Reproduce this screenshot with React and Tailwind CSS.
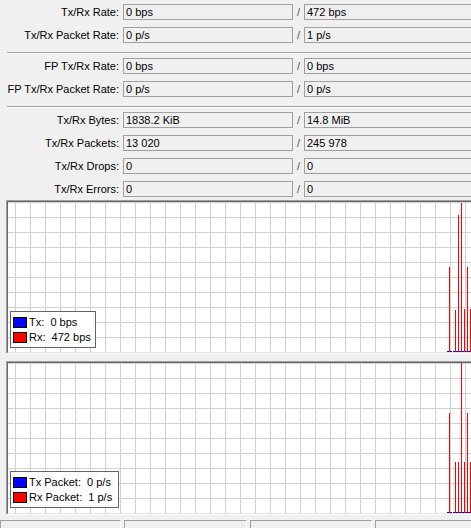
const rateRows = [
  ['Tx/Rx Rate:', '0 bps', '472 bps'],
  ['Tx/Rx Packet Rate:', '0 p/s', '1 p/s'],
];

const fpRows = [
  ['FP Tx/Rx Rate:', '0 bps', '0 bps'],
  ['FP Tx/Rx Packet Rate:', '0 p/s', '0 p/s'],
];

const totalRows = [
  ['Tx/Rx Bytes:', '1838.2 KiB', '14.8 MiB'],
  ['Tx/Rx Packets:', '13 020', '245 978'],
  ['Tx/Rx Drops:', '0', '0'],
  ['Tx/Rx Errors:', '0', '0'],
];

// x / y of each rx sample inside the 470x150 plot area
const trafficBars = [
  [441, 65], [447, 108], [450, 13], [453, 1], [456, 107], [459, 65], [462, 107],
];
const packetBars = [
  [441, 50], [447, 99], [450, 99], [453, 0], [456, 99], [459, 50], [462, 99],
];

function Field({ value }) {
  return (
    <div className="h-[16px] w-[170px] shrink-0 border border-[#a0a0a0] bg-[#f0f0f0] px-[2px] leading-[14px] whitespace-nowrap">
      {value}
    </div>
  );
}

function StatRow({ label, tx, rx }) {
  return (
    <div className="flex h-[16px] items-center">
      <div className="w-[119px] shrink-0 text-right whitespace-nowrap">{label}</div>
      <div className="w-[4px] shrink-0" />
      <Field value={tx} />
      <div className="w-[11px] shrink-0 text-center text-[#555]">/</div>
      <Field value={rx} />
    </div>
  );
}

function Group({ rows }) {
  return (
    <div className="flex flex-col gap-[7px]">
      {rows.map(([label, tx, rx]) => (
        <StatRow key={label} label={label} tx={tx} rx={rx} />
      ))}
    </div>
  );
}

function Separator() {
  return <div className="ml-[7px] mt-[9px] mb-[4px] h-[2px] border-t border-b border-t-[#a0a0a0] border-b-white" />;
}

function LegendRow({ color, text }) {
  return (
    <div className="flex h-[15px] items-center gap-[2px]">
      <span className={`h-[11px] w-[14px] border border-black ${color}`} />
      <span className="whitespace-pre">{text}</span>
    </div>
  );
}

function Graph({ bars, legend, legendWidth, legendTop }) {
  return (
    <div className="ml-[6px] w-[474px] border-t border-l border-r border-b border-t-[#a0a0a0] border-l-[#a0a0a0] border-r-white border-b-white">
      <div className="border-t border-l border-r border-b border-t-[#696969] border-l-[#696969] border-r-[#e3e3e3] border-b-[#e3e3e3]">
        <div className="relative h-[150px] overflow-hidden bg-white bg-[linear-gradient(to_right,#d0d0d0_1px,transparent_1px),linear-gradient(to_bottom,#d0d0d0_1px,transparent_1px)] bg-size-[15px_15px] bg-position-[7px_0px]">
          <svg className="absolute left-0 top-0" width="470" height="150">
            {Array.from({ length: 11 }, (_, i) => (
              <rect key={i} x={439 + i * 3} y="149" width="2" height="1" fill="#0000ff" />
            ))}
            {bars.map(([x, y]) => (
              <rect key={x} x={x} y={y} width="1" height={150 - y} fill="#ff0000" />
            ))}
          </svg>
          <div
            className="absolute left-[2px] h-[37px] border border-[#646464] bg-white pl-[2px] pt-[3px]"
            style={{ width: legendWidth, top: legendTop }}
          >
            <LegendRow color="bg-[#0000ff]" text={legend[0]} />
            <LegendRow color="bg-[#ff0000]" text={legend[1]} />
          </div>
        </div>
      </div>
    </div>
  );
}

export default function App() {
  return (
    <div className="h-[528px] w-[471px] overflow-hidden bg-[#f0f0f0] font-['Liberation_Sans',Arial,sans-serif] text-[11px] text-black">
      <div className="flex w-[480px] flex-col pt-[4px]">
        <Group rows={rateRows} />
        <Separator />
        <Group rows={fpRows} />
        <Separator />
        <Group rows={totalRows} />

        <div className="mt-[3px]">
          <Graph bars={trafficBars} legend={['Tx:  0 bps', 'Rx:  472 bps']} legendWidth={86} legendTop={109} />
        </div>
        <div className="mt-[7px]">
          <Graph
            bars={packetBars}
            legend={['Tx Packet:  0 p/s', 'Rx Packet:  1 p/s']}
            legendWidth={109}
            legendTop={108}
          />
        </div>

        <div className="mt-[5px] flex h-[10px] gap-[3px]">
          <div className="w-[121px] border-t border-l border-r border-t-[#a0a0a0] border-l-[#a0a0a0] border-r-white" />
          <div className="w-[123px] border-t border-l border-r border-t-[#a0a0a0] border-l-[#a0a0a0] border-r-white" />
          <div className="w-[122px] border-t border-l border-r border-t-[#a0a0a0] border-l-[#a0a0a0] border-r-white" />
          <div className="flex-1 border-t border-l border-t-[#a0a0a0] border-l-[#a0a0a0]" />
        </div>
      </div>
    </div>
  );
}
